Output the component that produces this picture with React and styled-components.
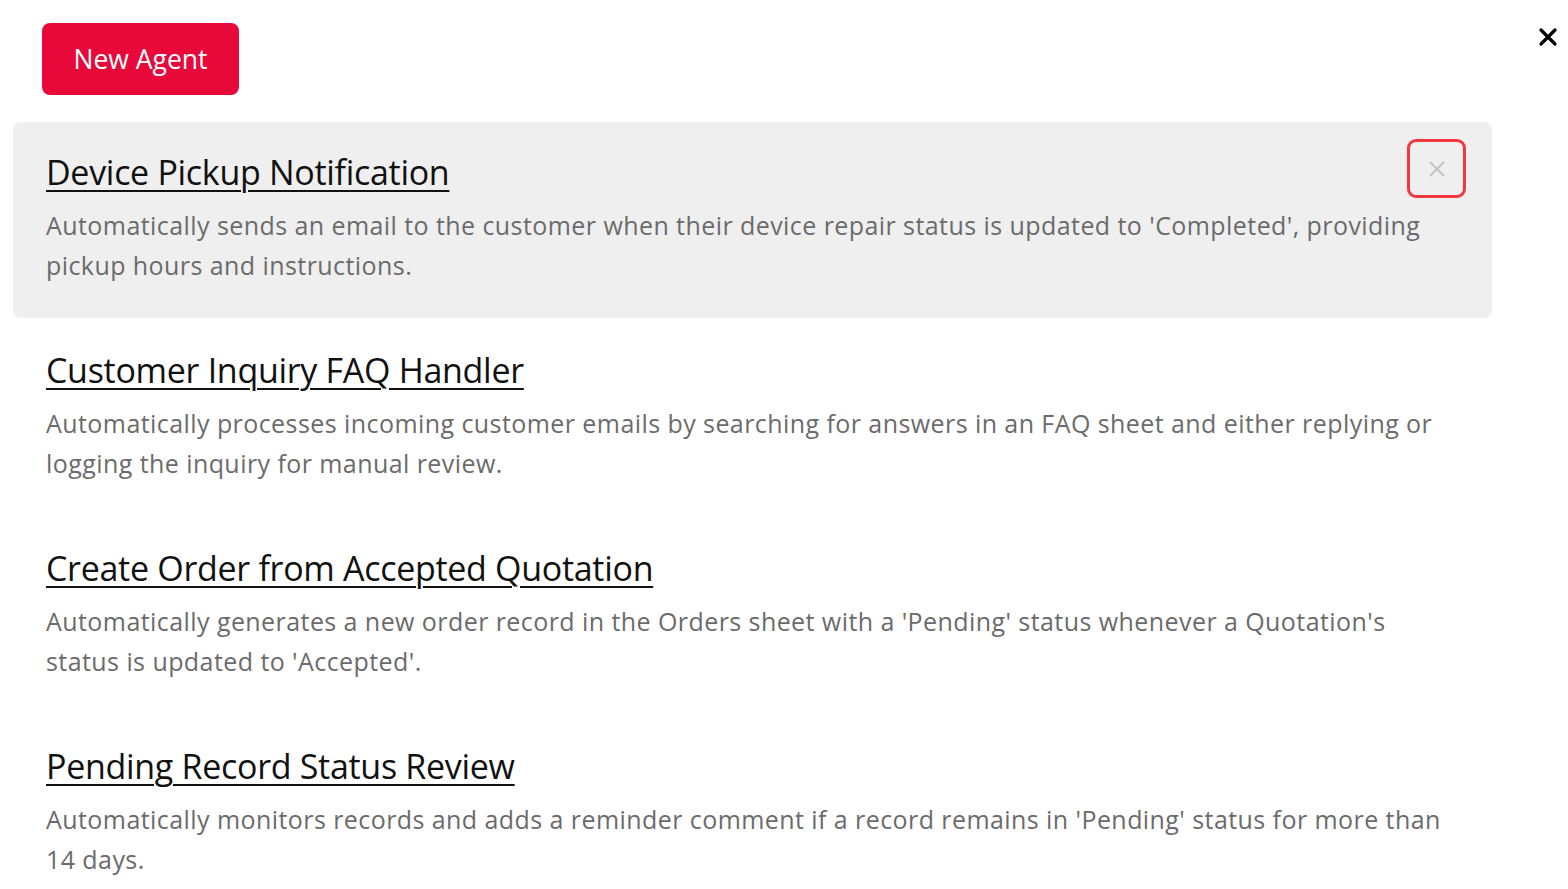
import React, { useState } from "react";
import styled, { createGlobalStyle } from "styled-components";

const agents = [
  {
    title: "Device Pickup Notification",
    text: "Automatically sends an email to the customer when their device repair status is updated to 'Completed', providing pickup hours and instructions.",
  },
  {
    title: "Customer Inquiry FAQ Handler",
    text: "Automatically processes incoming customer emails by searching for answers in an FAQ sheet and either replying or logging the inquiry for manual review.",
  },
  {
    title: "Create Order from Accepted Quotation",
    text: "Automatically generates a new order record in the Orders sheet with a 'Pending' status whenever a Quotation's status is updated to 'Accepted'.",
  },
  {
    title: "Pending Record Status Review",
    text: "Automatically monitors records and adds a reminder comment if a record remains in 'Pending' status for more than 14 days.",
  },
];

export default function App() {
  const [active, setActive] = useState(0);

  return (
    <Page>
      <GlobalStyle />
      <Top>
        <NewButton>New Agent</NewButton>
        <CloseButton aria-label="Close">
          <svg width="20" height="20" viewBox="0 0 20 20">
            <path d="M3 3L17 17M17 3L3 17" stroke="#000" strokeWidth="3.2" strokeLinecap="round" />
          </svg>
        </CloseButton>
      </Top>
      <List>
        {agents.map((a, i) => (
          <Item key={a.title} $active={i === active} onMouseEnter={() => setActive(i)}>
            <Header>
              <Title href="#">{a.title}</Title>
              {i === active && (
                <Remove aria-label="Delete">
                  <svg width="20" height="20" viewBox="0 0 20 20">
                    <path d="M3 3L17 17M17 3L3 17" stroke="#c4c4c4" strokeWidth="2.2" />
                  </svg>
                </Remove>
              )}
            </Header>
            <Desc>{a.text}</Desc>
          </Item>
        ))}
      </List>
    </Page>
  );
}

const GlobalStyle = createGlobalStyle`
  body {
    margin: 0;
    background: #fff;
    font-family: "Open Sans", "Liberation Sans", sans-serif;
  }
`;

const Page = styled.div`
  width: 1568px;
  height: 889px;
  overflow: hidden;
  box-sizing: border-box;
  padding: 23px 0 0 13px;
`;

const Top = styled.div`
  display: flex;
  justify-content: space-between;
  align-items: flex-start;
  padding-left: 29px;
  margin-bottom: 27px;
`;

const NewButton = styled.button`
  width: 197px;
  height: 72px;
  border: none;
  border-radius: 8px;
  background: #e8083a;
  color: #fff;
  font-family: "Open Sans", sans-serif;
  font-size: 26.5px;
  cursor: pointer;
`;

const CloseButton = styled.button`
  width: 24px;
  height: 24px;
  margin: 2px 8px 0 0;
  padding: 0;
  border: none;
  background: none;
  display: flex;
  align-items: center;
  justify-content: center;
`;

const List = styled.div`
  width: 1479px;
  display: flex;
  flex-direction: column;
  gap: 2px;
`;

const Item = styled.div`
  display: flex;
  flex-direction: column;
  gap: 11px;
  height: 196px;
  box-sizing: border-box;
  padding: 28px 26px 0 33px;
  border-radius: 8px;
  background: ${(p) => (p.$active ? "#efefef" : "transparent")};
`;

const Header = styled.div`
  display: flex;
  justify-content: space-between;
  align-items: flex-start;
  height: 44px;
`;

const Title = styled.a`
  font-size: 34px;
  line-height: 44px;
  color: #111;
  letter-spacing: -0.3px;
  text-decoration: underline;
  text-decoration-thickness: 2px;
  text-underline-offset: 5px;
`;

const Desc = styled.p`
  margin: 0;
  font-size: 25px;
  line-height: 40px;
  color: #6b6b6b;
  letter-spacing: 0.43px;
  max-width: 1400px;
`;

const Remove = styled.button`
  width: 59px;
  height: 59px;
  margin-top: -11px;
  flex-shrink: 0;
  box-sizing: border-box;
  border: 3px solid #f2383e;
  border-radius: 9px;
  background: transparent;
  display: flex;
  align-items: center;
  justify-content: center;
  padding: 0;
`;
